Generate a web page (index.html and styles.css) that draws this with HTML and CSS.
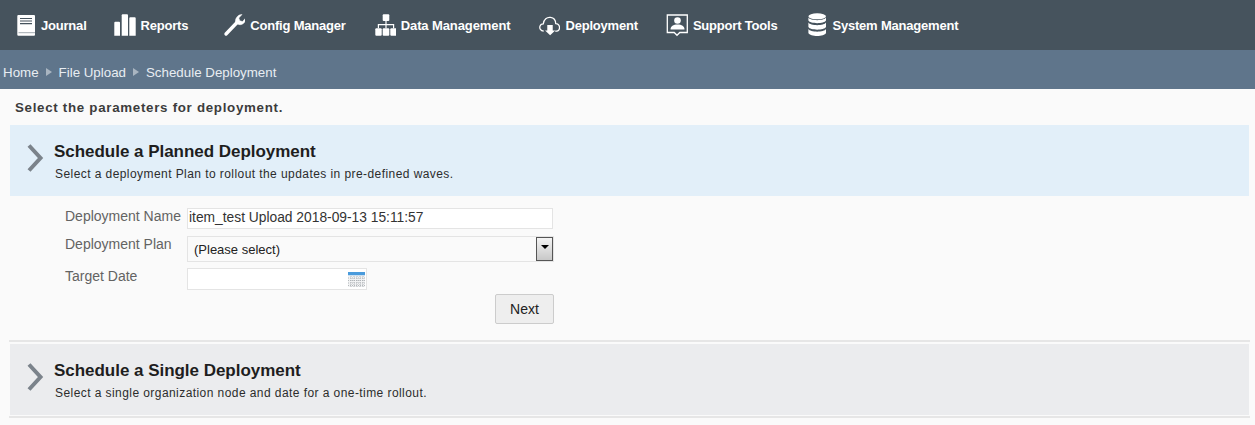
FILE: index.html
```html
<!DOCTYPE html>
<html>
<head>
    <title>Schedule Deployment</title>
    <meta charset="UTF-8">
    <link rel="stylesheet" href="styles.css">
</head>
<body>
    <nav class="topnav">
        <a class="nav-item nav-journal">
            <svg class="nav-icon" viewBox="0 0 22 24"><path d="M4.300 2h15.700a1 1 0 0 1 1 1v18.700a1 1 0 0 1-1 1H4.300a1 1 0 0 1-1-1V3a1 1 0 0 1 1-1z" fill="#fff"/><path d="M6 5.500h12M6 8h12M6 10.700h12" stroke="#46535d" stroke-width="1.200"/><path d="M4.500 19.700h16.500" stroke="#8a949c" stroke-width="0.800"/></svg>
            Journal
        </a>
        <a class="nav-item">
            <svg class="nav-icon" viewBox="0 0 22 24" fill="#fff"><path d="M.3 9.700a1 1 0 0 1 1-1H5a1 1 0 0 1 1 1v13H.3z"/><path d="M7.700 2.300a1 1 0 0 1 1-1H13a1 1 0 0 1 1 1v20.400H7.700z"/><path d="M15.300 5.300a1 1 0 0 1 1-1h4.400a1 1 0 0 1 1 1v17.400h-6.400z"/></svg>
            Reports
        </a>
        <a class="nav-item nav-wide">
            <svg class="nav-icon" viewBox="0 0 22 24" fill="none" stroke="#fff"><path d="M3 21 L14 9.500" stroke-width="3.400" stroke-linecap="round"/><path d="M19 1.500 L15.800 5 L16.800 7.800 L19.500 8.600 L22.500 5.200 C23.200 9 19.500 12.500 15.800 11.500 L12.800 10.500 C11.300 6.500 14.500 1.300 19 1.500Z" fill="#fff" stroke-width="0.500"/></svg>
            Config Manager
        </a>
        <a class="nav-item nav-data">
            <svg class="nav-icon" viewBox="0 0 22 24" fill="#fff"><rect x="8.700" y="1.300" width="6.600" height="6.700" rx="1"/><path d="M11.400 8h1.200v3.100h7.600v4.200H19v-3h-6.400v3h-1.200v-3H5v3H3.800v-4.200h7.600z"/><rect x="1.300" y="15.300" width="6.400" height="7.400" rx="1"/><rect x="8.700" y="15.300" width="6.600" height="7.400" rx="1"/><rect x="16.300" y="15.300" width="6.400" height="7.400" rx="1"/></svg>
            Data Management
        </a>
        <a class="nav-item">
            <svg class="nav-icon" viewBox="0 0 23 24" fill="none" stroke="#fff"><path d="M6 18.500 C2.500 18 1.500 15.500 2 13.500 C2.500 11.500 4 10.800 5.500 10.800 C6 6 9.500 3.500 13 4 C16.500 4.500 18.500 7 18.500 10.500 C21 10.800 22.500 12.500 22.500 14.800 C22.500 17 20.500 18.500 18 18.500" stroke-width="1.300"/><path d="M9.700 12h5.700v5.700H18l-5.300 5-5.300-5h2.300z" fill="#fff" stroke="none"/></svg>
            Deployment
        </a>
        <a class="nav-item">
            <svg class="nav-icon" viewBox="0 0 22 24" fill="none" stroke="#fff"><path d="M1.300 2h20v17.500h-7.500l-2.800 2.800-2.800-2.800H1.300z" stroke-width="1.300"/><circle cx="11.500" cy="7.500" r="3.300" fill="#fff" stroke="none"/><path d="M4.500 16.500c0-3.500 2.800-5 7-5s7 1.500 7 5z" fill="#fff" stroke="none"/></svg>
            Support Tools
        </a>
        <a class="nav-item">
            <svg class="nav-icon" viewBox="0 0 22 24" fill="#fff"><ellipse cx="12.200" cy="3.300" rx="8.800" ry="3"/><path d="M3.400 4.500C5 8 19.400 8 21 4.500V7.500C19.400 11 5 11 3.400 7.500z"/><path d="M3.400 9.500C5 13 19.400 13 21 9.500V14C19.400 17.500 5 17.500 3.400 14z"/><path d="M3.400 16C5 19.500 19.400 19.500 21 16V20C19.400 24 5 24 3.400 20z"/></svg>
            System Management
        </a>
    </nav>

    <div class="breadcrumb">
        <span>Home</span><i class="crumb-arrow"></i><span>File Upload</span><i class="crumb-arrow"></i><span>Schedule Deployment</span>
    </div>

    <div class="content">
        <p class="intro">Select the parameters for deployment.</p>

        <section class="panel panel-active">
            <svg class="chevron" viewBox="0 0 18 28" fill="none" stroke="#7b838b"><path d="M2 1.500 L13.500 14 L2 26.500" stroke-width="4"/></svg>
            <div class="panel-text">
                <h2>Schedule a Planned Deployment</h2>
                <p>Select a deployment Plan to rollout the updates in pre-defined waves.</p>
            </div>
        </section>

        <form class="deploy-form">
            <div class="form-row row-name">
                <label>Deployment Name</label>
                <input class="field field-name" type="text" value="item_test Upload 2018-09-13 15:11:57">
            </div>
            <div class="form-row row-plan">
                <label>Deployment Plan</label>
                <div class="field field-plan">
                    <span>(Please select)</span>
                    <span class="select-btn"><i></i></span>
                </div>
            </div>
            <div class="form-row row-date">
                <label>Target Date</label>
                <div class="field field-date">
                    <svg class="cal-icon" viewBox="0 0 17 15">
                        <rect width="17" height="3.500" fill="#4a9bdc"/>
                        <rect y="3.500" width="17" height="11.500" fill="#f1f2f3"/>
                        <path d="M0 6h17M0 8.500h17M0 11h17M0 13.500h17M3 4v11M6 4v11M9 4v11M12 4v11M15 4v11" stroke="#a4a8ac" stroke-width="0.800" stroke-dasharray="1 1"/>
                    </svg>
                </div>
            </div>
            <div class="form-actions">
                <button type="button">Next</button>
            </div>
        </form>

        <hr class="divider">

        <section class="panel panel-idle">
            <svg class="chevron" viewBox="0 0 18 28" fill="none" stroke="#7b838b"><path d="M2 1.500 L13.500 14 L2 26.500" stroke-width="4"/></svg>
            <div class="panel-text">
                <h2>Schedule a Single Deployment</h2>
                <p>Select a single organization node and date for a one-time rollout.</p>
            </div>
        </section>

        <hr class="divider divider-end">
    </div>
</body>
</html>
```

FILE: styles.css
```css
html, body {
    margin: 0;
    height: 425px;
    overflow: hidden;
}
body {
    font-family: "Liberation Sans", Arial, sans-serif;
    background-color: #fafafa;
    color: #222;
}
.topnav {
    display: flex;
    align-items: center;
    gap: 28px;
    height: 50px;
    padding-left: 14px;
    background-color: #46535d;
}
.nav-item {
    display: flex;
    align-items: center;
    gap: 5px;
    color: #fff;
    font-size: 13px;
    font-weight: bold;
    letter-spacing: -0.2px;
}
.nav-journal {
    margin-right: -1px;
}
.nav-wide {
    margin-left: 7px;
}
.nav-data {
    letter-spacing: -0.1px;
}
.nav-icon {
    width: 22px;
    height: 24px;
}
.breadcrumb {
    display: flex;
    align-items: center;
    height: 39px;
    box-sizing: border-box;
    padding: 5px 0 0 3px;
    background-color: #5f758b;
    color: #e8edf2;
    font-size: 13.33px;
}
.crumb-arrow {
    width: 0;
    height: 0;
    margin: 0 7px;
    border-left: 6px solid #a9b5c1;
    border-top: 4px solid transparent;
    border-bottom: 4px solid transparent;
}
.content {
    padding: 0 6px 0 10px;
}
.intro {
    margin: 0;
    height: 36px;
    padding: 11px 0 0 5px;
    box-sizing: border-box;
    font-size: 13.33px;
    font-weight: bold;
    letter-spacing: 0.7px;
    color: #3c3c3c;
}
.panel {
    display: flex;
    align-items: center;
    height: 71px;
    padding-left: 17px;
}
.panel-active {
    background-color: #e2eff9;
}
.panel-idle {
    background-color: #ebecee;
}
.chevron {
    width: 18px;
    height: 28px;
    margin: -5px 9px 0 0;
    flex: none;
}
.panel-text {
    padding-top: 2px;
}
.panel h2 {
    margin: 0 0 5px;
    font-size: 17px;
    letter-spacing: -0.03px;
    color: #1e1e1e;
}
.panel p {
    margin: 0 0 0 1px;
    font-size: 12px;
    letter-spacing: 0.43px;
    color: #2c2c2c;
}
.deploy-form {
    height: 144px;
    box-sizing: border-box;
    padding-top: 12px;
}
.form-row {
    display: flex;
    align-items: flex-start;
}
.form-row label {
    width: 122px;
    padding-left: 55px;
    font-size: 14px;
    color: #636363;
    flex: none;
}
.field {
    box-sizing: border-box;
    background-color: #fff;
    border: 1px solid #e4e4e4;
    font: 13px "Liberation Sans", Arial, sans-serif;
    color: #222;
}
.row-name {
    height: 28px;
}
.field-name {
    width: 366px;
    height: 21px;
    padding: 0 1px 2px;
    font-size: 13.8px;
    color: #333;
    outline: none;
}
.row-plan {
    height: 32px;
}
.field-plan {
    display: flex;
    align-items: center;
    justify-content: space-between;
    width: 367px;
    height: 26px;
    padding-left: 6px;
    background-color: #fafafa;
}
.select-btn {
    display: flex;
    justify-content: center;
    padding-top: 7px;
    box-sizing: border-box;
    width: 17px;
    height: 24px;
    border: 1px solid #555;
    background: linear-gradient(#f4f4f4, #c8c8c8);
}
.select-btn i {
    width: 0;
    height: 0;
    border-top: 4px solid #000;
    border-left: 4px solid transparent;
    border-right: 4px solid transparent;
}
.field-date {
    display: flex;
    align-items: center;
    justify-content: flex-end;
    width: 180px;
    height: 22px;
    padding-right: 1px;
}
.cal-icon {
    width: 17px;
    height: 15px;
}
.row-date {
    height: 26px;
}
.form-actions {
    display: flex;
    width: 544px;
    justify-content: flex-end;
}
.form-actions button {
    width: 59px;
    height: 30px;
    padding: 0;
    border: 1px solid #ccc;
    border-radius: 2px;
    background-color: #eeeeee;
    font: 14px "Liberation Sans", Arial, sans-serif;
    color: #222;
}
.divider {
    height: 2px;
    margin: 0 -1px 2px;
    border: 0;
    background-color: #e6e6e6;
}
.divider-end {
    margin: 1px -1px 0;
}
```
